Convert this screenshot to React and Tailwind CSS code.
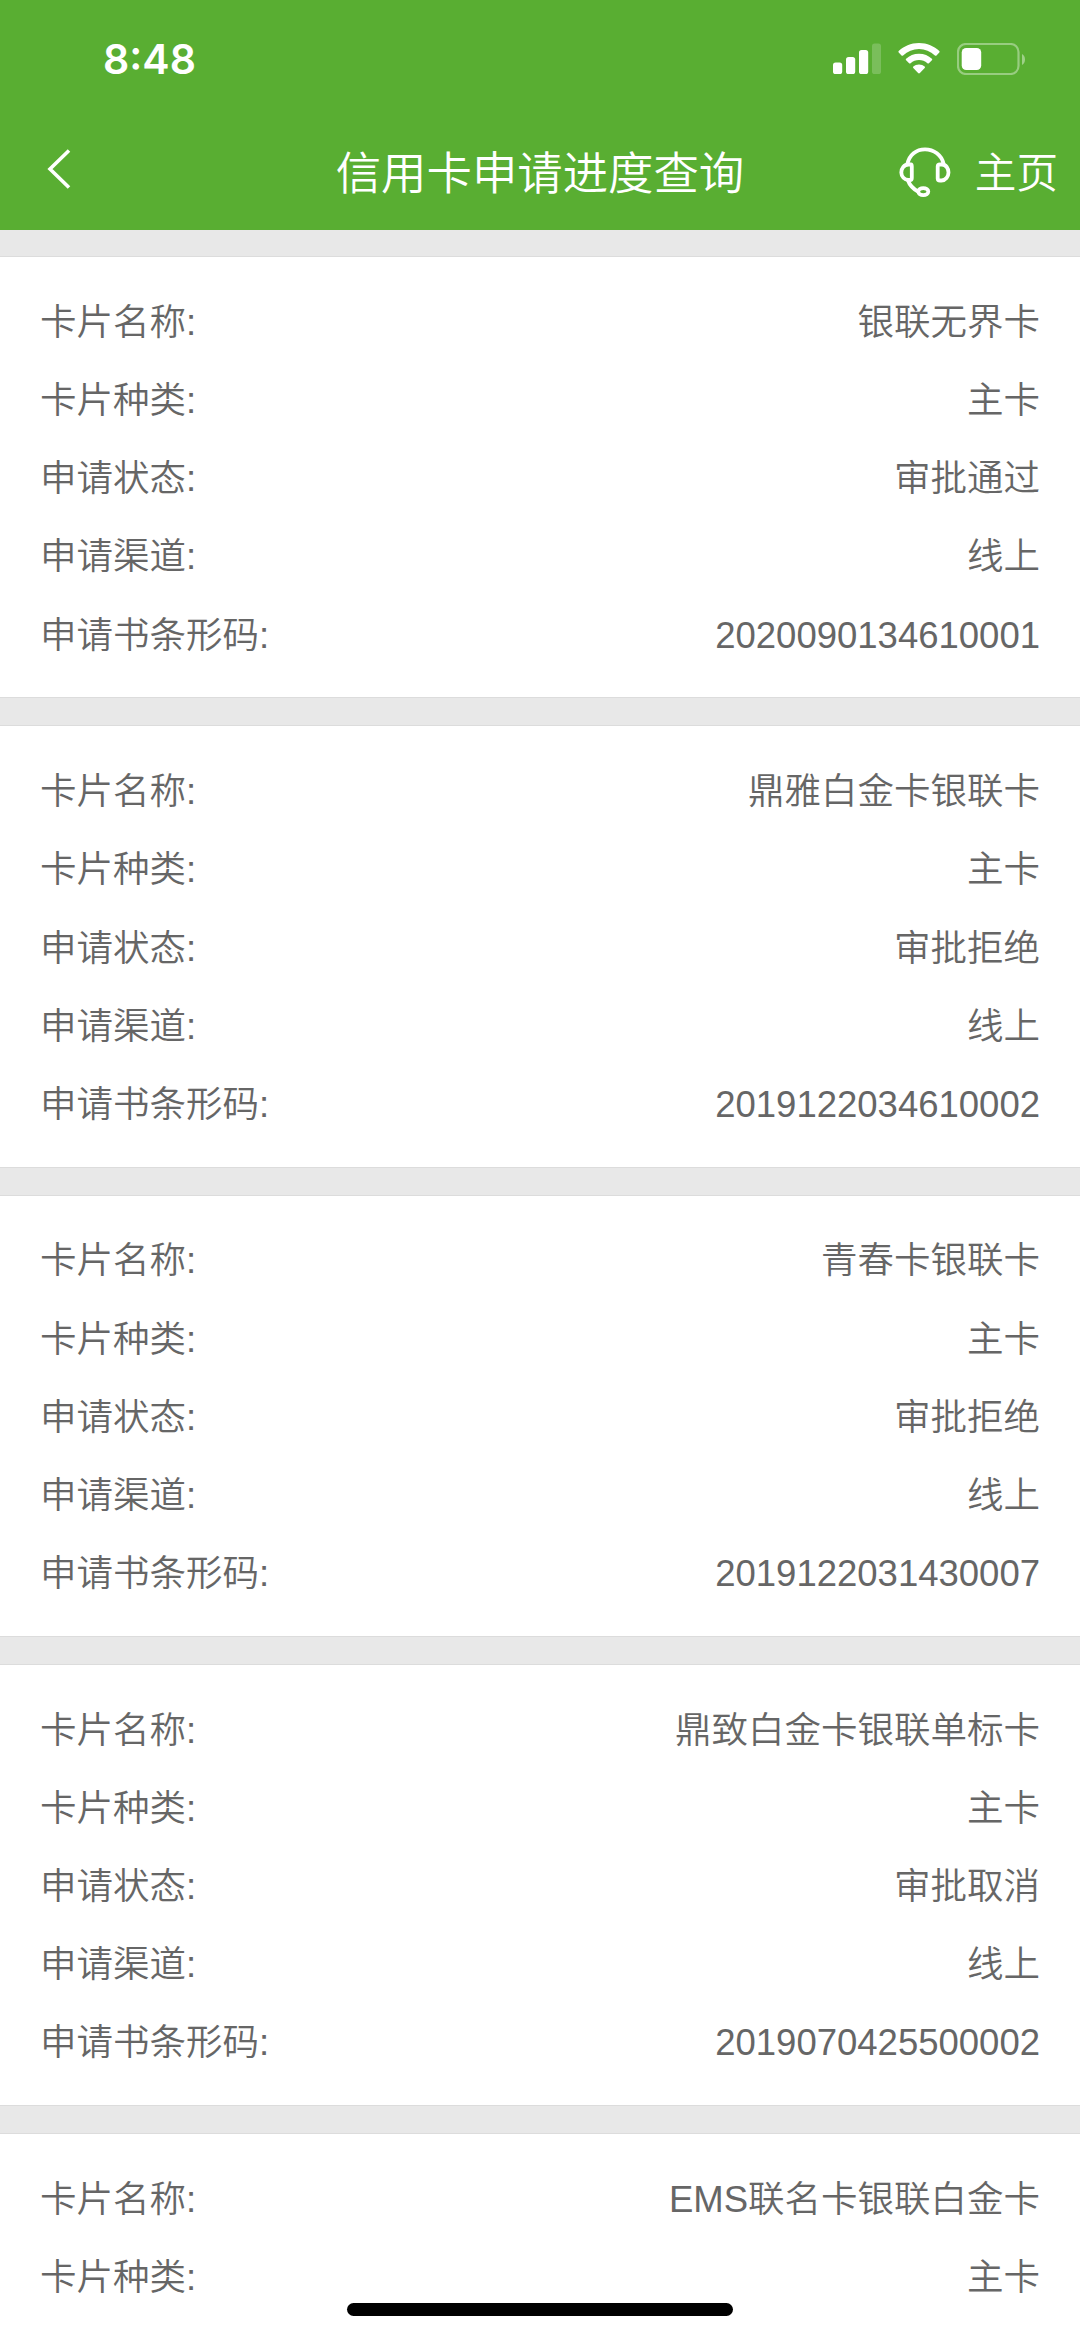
const applications = [
  { name: "银联无界卡", type: "主卡", status: "审批通过", channel: "线上", barcode: "2020090134610001" },
  { name: "鼎雅白金卡银联卡", type: "主卡", status: "审批拒绝", channel: "线上", barcode: "2019122034610002" },
  { name: "青春卡银联卡", type: "主卡", status: "审批拒绝", channel: "线上", barcode: "2019122031430007" },
  { name: "鼎致白金卡银联单标卡", type: "主卡", status: "审批取消", channel: "线上", barcode: "2019070425500002" },
  { name: "EMS联名卡银联白金卡", type: "主卡" },
];

const fields = [
  { key: "name", label: "卡片名称:" },
  { key: "type", label: "卡片种类:" },
  { key: "status", label: "申请状态:" },
  { key: "channel", label: "申请渠道:" },
  { key: "barcode", label: "申请书条形码:" },
];

function SignalIcon() {
  return (
    <svg className="h-8 w-12" viewBox="0 0 48 32" fill="#fff">
      <rect x="0" y="19.5" width="9.2" height="11.5" rx="2.6" />
      <rect x="13" y="14" width="9.2" height="17" rx="2.6" />
      <rect x="26" y="7" width="9.2" height="24" rx="2.6" />
      <rect x="39" y="0.5" width="9" height="30.5" rx="2.6" opacity="0.2" />
    </svg>
  );
}

function WifiIcon() {
  return (
    <svg className="ml-[17px] h-8 w-[42px]" viewBox="0 0 42 32" fill="#fff">
      <path d="M21 0C29.2 0 36.2 3.2 41.3 8.1Q42 8.9 41.3 9.6L38.5 12.5Q37.7 13.2 36.9 12.5C32.5 8.4 27 6.1 21 6.1S9.5 8.4 5.1 12.5Q4.3 13.2 3.5 12.5L0.7 9.6Q0 8.9 0.7 8.1C5.8 3.2 12.8 0 21 0Z" />
      <path d="M21 10.7C26.1 10.7 30.5 12.6 33.9 15.7Q34.7 16.5 33.9 17.3L30.9 20.2Q30.2 20.9 29.4 20.2C27 18.1 24.2 17 21 17S15 18.1 12.6 20.2Q11.8 20.9 11.1 20.2L8.1 17.3Q7.3 16.5 8.1 15.7C11.5 12.6 15.9 10.7 21 10.7Z" />
      <path d="M21 21.6C23.3 21.6 25.2 22.4 26.7 23.6Q27.4 24.3 26.7 25L21.9 30.1Q21 31 20.1 30.1L15.3 25Q14.6 24.3 15.3 23.6C16.8 22.4 18.7 21.6 21 21.6Z" />
    </svg>
  );
}

function BatteryIcon() {
  return (
    <svg className="ml-[17px] h-8 w-[68px]" viewBox="0 0 68 32" fill="none">
      <rect x="1" y="1" width="60.5" height="30" rx="8" stroke="#fff" strokeWidth="2.2" opacity="0.38" />
      <rect x="4.7" y="5" width="19.5" height="22" rx="4.5" fill="#fff" />
      <path d="M65 11C69 13 69 20 65 22Z" fill="#fff" opacity="0.42" />
    </svg>
  );
}

function HeadsetIcon() {
  return (
    <svg
      className="mb-1 h-[50px] w-[52px]"
      viewBox="0 0 52 50"
      fill="none"
      stroke="#fff"
      strokeWidth="3.8"
      strokeLinecap="round"
      strokeLinejoin="round"
    >
      <path d="M8.5 16.5C10.5 8 17 2.3 26 2.3S42.5 8 44.5 16.5" />
      <path d="M12 17.5H9.5C5 17.5 2.3 21.5 2.3 25.5S5.5 33 9.5 33H11Q12.8 33 12.8 31V19.5Q12.8 17.5 12 17.5Z" />
      <path d="M41 17.5H43C47 17.5 49.5 21.5 49.5 25.5S46.5 33.5 42.5 33.5H41Q38.7 33.5 38.7 31.5V19.5Q38.7 17.5 41 17.5Z" />
      <path d="M9 33.5C11 39 14.5 42 19 44.5" />
      <ellipse cx="24.3" cy="44.6" rx="5" ry="3.5" />
    </svg>
  );
}

function StatusBar() {
  return (
    <div className="flex h-[118px] items-center justify-between pr-[55px] pl-[103px]">
      <span className="font-['Inter'] text-[41px] leading-none font-semibold">8:48</span>
      <div className="flex items-center">
        <SignalIcon />
        <WifiIcon />
        <BatteryIcon />
      </div>
    </div>
  );
}

function NavBar() {
  return (
    <div className="grid h-[112px] grid-cols-[1fr_auto_1fr] items-center px-[22px]">
      <svg className="mb-2.5 ml-6 h-11 w-7" viewBox="0 0 28 44" fill="none" stroke="#fff" strokeWidth="3.6">
        <path d="M23 3.5L4 22L23 40.5" />
      </svg>
      <h1 className="pt-0.5 text-[45.4px] leading-none font-[350]">信用卡申请进度查询</h1>
      <div className="flex items-center justify-end">
        <HeadsetIcon />
        <span className="ml-6 text-[41.6px] leading-none font-[350]">主页</span>
      </div>
    </div>
  );
}

function ApplicationCard({ application }) {
  return (
    <section className="mb-[27px] h-[442.3px] shrink-0 border-y border-[#dcdcdc] bg-white px-10 pt-[27px]">
      {fields
        .filter((field) => application[field.key])
        .map((field) => (
          <div key={field.key} className="flex h-[78.2px] items-center justify-between">
            <span>{field.label}</span>
            <span>{application[field.key]}</span>
          </div>
        ))}
    </section>
  );
}

export default function App() {
  return (
    <div className="relative flex h-[2337px] w-[1080px] flex-col overflow-hidden bg-[#e8e8e8] font-['Liberation_Sans','Noto_Sans_CJK_SC',sans-serif] text-[36.5px] leading-none font-[350] text-[#666]">
      <header className="h-[230px] shrink-0 bg-[#59ae32] text-white">
        <StatusBar />
        <NavBar />
      </header>
      <main className="flex flex-col pt-[26px]">
        {applications.map((application) => (
          <ApplicationCard key={application.name} application={application} />
        ))}
      </main>
      <div className="absolute bottom-[21px] left-[347px] h-[13px] w-[386px] rounded-full bg-black" />
    </div>
  );
}
